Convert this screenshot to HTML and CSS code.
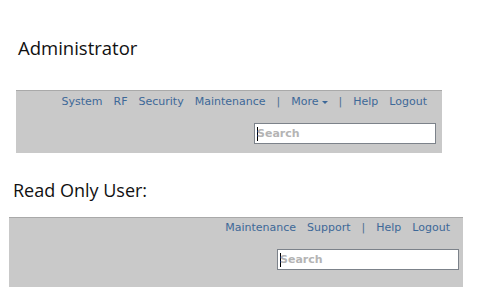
FILE: index.html
```html
<!DOCTYPE html>
<html lang="en">
<head>
<meta charset="UTF-8">
<title>Header menus</title>
<link rel="stylesheet" href="styles.css">
</head>
<body>
  <!-- admin header -->
  <section class="role role-admin">
    <h2 class="role-title">Administrator</h2>
    <div class="bar">
      <nav class="menu">
        <a href="#">System</a>
        <a href="#">RF</a>
        <a href="#">Security</a>
        <a href="#">Maintenance</a>
        <span class="sep">|</span>
        <a href="#" class="more">More<span class="caret-down"></span></a>
        <span class="sep">|</span>
        <a href="#">Help</a>
        <a href="#">Logout</a>
      </nav>
      <div class="search"><span class="cursor"></span><span class="hint">Search</span></div>
    </div>
  </section>

  <!-- read only header -->
  <section class="role role-readonly">
    <h2 class="role-title">Read Only User:</h2>
    <div class="bar">
      <nav class="menu">
        <a href="#">Maintenance</a>
        <a href="#">Support</a>
        <span class="sep">|</span>
        <a href="#">Help</a>
        <a href="#">Logout</a>
      </nav>
      <div class="search"><span class="cursor"></span><span class="hint">Search</span></div>
    </div>
  </section>
</body>
</html>
```

FILE: styles.css
```css
body {
  margin: 0;
  padding: 0;
  background: #fff;
  font-family: 'DejaVu Sans', Verdana, sans-serif;
}

.role-title {
  margin: 0;
  font-family: 'Open Sans', 'Noto Sans', sans-serif;
  font-weight: 400;
  font-size: 18px;
  line-height: 24px;
  color: #111;
}

.role-admin {
  padding-top: 36px;
}

.role-admin .role-title {
  padding-left: 18px;
  font-size: 18.5px;
}

.role-admin .bar {
  margin: 30px 0 0 16px;
  width: 426px;
  height: 63px;
  padding-right: 6px;
}

.role-readonly {
  padding-top: 25px;
}

.role-readonly .role-title {
  padding-left: 13px;
}

.role-readonly .bar {
  margin: 15px 0 0 9px;
  width: 454px;
  height: 70px;
  padding-right: 4px;
}

.bar {
  box-sizing: border-box;
  background-color: #c9c9c9;
  border-top: 1px solid #a9a9a9;
  display: flex;
  flex-direction: column;
  align-items: flex-end;
}

.menu {
  display: flex;
  align-items: center;
  gap: 11px;
  padding: 3px 9px 0 0;
  font-size: 11px;
  line-height: 16px;
}

.role-readonly .menu {
  padding-top: 2px;
  padding-right: 9px;
}

.menu a {
  color: #3d6898;
  text-decoration: none;
}

.sep {
  color: #4f6f92;
}

.more {
  display: flex;
  align-items: center;
}

/* 小さい下向き三角 */
.caret-down {
  margin-left: 3px;
  width: 0;
  height: 0;
  border-left: 3px solid transparent;
  border-right: 3px solid transparent;
  border-top: 3px solid #3d6898;
}

.search {
  box-sizing: border-box;
  margin-top: 13px;
  width: 182px;
  height: 21px;
  background: #fff;
  border: 1px solid #7c828a;
  display: flex;
  align-items: center;
  padding-left: 2px;
  font-size: 11px;
  font-weight: 700;
}

.cursor {
  width: 1px;
  height: 14px;
  background: #000;
}

.hint {
  color: #b4b4b4;
  margin-left: -1px;
}
```
